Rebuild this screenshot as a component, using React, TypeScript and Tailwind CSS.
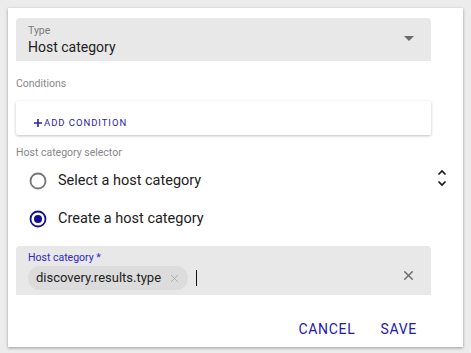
import { X } from 'lucide-react'

const font = { fontFamily: 'Roboto, "Liberation Sans", sans-serif' }

function Radio({ checked, label }: { checked: boolean; label: string }) {
  return (
    <div className="h-[38px] flex items-center pl-[13px]">
      <svg width="18" height="18" viewBox="0 0 18 18" className="shrink-0">
        <circle
          cx="9"
          cy="9"
          r="7.5"
          fill="none"
          stroke={checked ? '#14108f' : '#757575'}
          strokeWidth="1.8"
        />
        {checked && <circle cx="9" cy="9" r="4" fill="#14108f" />}
      </svg>
      <span className="ml-[11px] text-[14.5px] leading-[20px] text-[#212121]">{label}</span>
    </div>
  )
}

export default function App() {
  return (
    <div className="w-[471px] h-[353px] bg-[#ececec] p-2" style={font}>
      <div className="w-[455px] h-[339px] bg-white shadow-[0_1px_3px_rgba(0,0,0,0.35)] pl-2 pr-8 pt-[10px] flex flex-col">
        {/* type select */}
        <div className="h-[43px] bg-[#e8e8e8] rounded-t-[4px] px-3 flex items-start">
          <div className="flex flex-col flex-1">
            <span className="mt-[7px] text-[10.5px] leading-[12px] text-[#7a7a7a]">Type</span>
            <span className="mt-px text-[14px] leading-[19px] text-[#212121]">Host category</span>
          </div>
          <svg width="10" height="5" viewBox="0 0 10 5" className="mt-[18px] mr-[5px]">
            <path d="M0 0 L10 0 L5 5 Z" fill="#6b6b6b" />
          </svg>
        </div>

        <div className="mt-[15px] text-[10.5px] leading-[16px] text-[#888888]">Conditions</div>

        {/* conditions card */}
        <div className="mt-[9px] h-[34px] bg-white rounded-[2px] shadow-[0_1px_3px_rgba(0,0,0,0.25)] pt-[15px] pl-[18px]">
          <div className="flex items-center h-[14px] text-[#2a22b0]">
            <svg width="8" height="8" viewBox="0 0 8 8">
              <path d="M4 0 V8 M0 4 H8" stroke="#2a22b0" strokeWidth="1.6" />
            </svg>
            <span className="ml-[2px] text-[9.5px] leading-[14px] tracking-[0.1em]">ADD CONDITION</span>
          </div>
        </div>

        <div className="mt-[10px] text-[10.5px] leading-[16px] text-[#888888]">Host category selector</div>

        {/* radios */}
        <div className="relative mt-px">
          <Radio checked={false} label="Select a host category" />
          <Radio checked label="Create a host category" />
          <svg
            width="10"
            height="18"
            viewBox="0 0 10 18"
            className="absolute right-[-16px] top-[7px]"
          >
            <path d="M1.5 5.5 L5 2 L8.5 5.5" fill="none" stroke="#1a1a1a" strokeWidth="1.7" />
            <path d="M1.5 12.5 L5 16 L8.5 12.5" fill="none" stroke="#1a1a1a" strokeWidth="1.7" />
          </svg>
        </div>

        {/* host category field */}
        <div className="mt-[8px] h-[49px] bg-[#e8e8e8] rounded-t-[4px] px-3 pt-1 flex">
          <div className="flex flex-col flex-1">
            <span className="text-[10.5px] leading-[16px] text-[#2f27c4]">Host category *</span>
            <div className="flex items-center h-[24px]">
              <div className="h-[24px] rounded-full bg-[#dcdcdc] flex items-center pl-2 pr-[7px]">
                <span className="text-[13px] leading-[16px] text-[#212121]">discovery.results.type</span>
                <X size={13} strokeWidth={1.6} className="ml-[7px] text-[#a8a8a8]" />
              </div>
              <div className="ml-2 w-px h-[16px] bg-[#111]" />
            </div>
          </div>
          <X size={15} strokeWidth={2.2} className="mt-[18px] mr-[3px] text-[#6b6b6b]" />
        </div>

        {/* actions */}
        <div className="mt-4 flex justify-end gap-[9px] pr-[6px]">
          <button className="h-[36px] px-2 text-[14px] tracking-[0.05em] text-[#2318b0]">CANCEL</button>
          <button className="h-[36px] px-2 text-[14px] tracking-[0.05em] text-[#2318b0]">SAVE</button>
        </div>
      </div>
    </div>
  )
}
